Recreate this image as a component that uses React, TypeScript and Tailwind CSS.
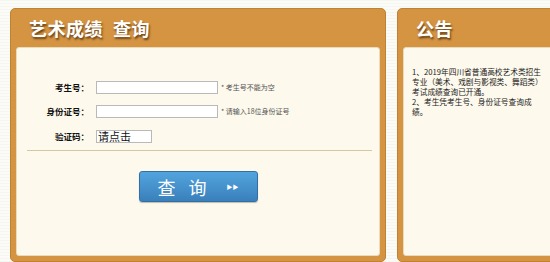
import React from 'react'

const cjk = { fontFamily: '"Noto Sans CJK SC", "Noto Sans", sans-serif' }

const Panel = ({ title, className, children }: { title: React.ReactNode; className: string; children: React.ReactNode }) => {
  return (
    <div
      className={`flex flex-col shrink-0 rounded-[5px] border border-[#bf8233] bg-[#d49442] px-[5px] pb-[5px] ${className}`}
    >
      <div className="h-[38px] flex items-center pl-[13px]">
        <h2
          className="flex gap-[10px] text-[18px] leading-none font-bold text-white tracking-[0.5px] [text-shadow:1px_2px_2px_rgba(70,40,10,0.75)]"
          style={cjk}
        >
          {title}
        </h2>
      </div>
      <div className="flex-1 rounded-[3px] border border-[#e9dcbd] bg-[#fdf9ec]">{children}</div>
    </div>
  )
}

const Row = ({ label, hint, children }: { label: string; hint?: string; children: React.ReactNode }) => {
  return (
    <div className="flex items-center h-[13px]">
      <label className="w-[73px] text-right text-[8.5px] font-bold text-[#111] pr-[1px]">{label}</label>
      <div className="ml-[6px] flex items-center">{children}</div>
      {hint && <span className="ml-[3px] text-[7px] text-[#555]">{hint}</span>}
    </div>
  )
}

export default function App() {
  return (
    <div
      className="w-[550px] h-[262px] overflow-hidden bg-[repeating-linear-gradient(0deg,#f6f6f1_0px,#f6f6f1_1px,#fbfbf8_1px,#fbfbf8_3px)]"
      style={cjk}
    >
      <div className="flex gap-[11px] pl-[10px] pt-[8px] h-[262px]">
        <Panel
          title={
            <>
              <span>艺术成绩</span>
              <span>查询</span>
            </>
          }
          className="w-[376px] h-[254px]"
        >
          <div className="flex flex-col pt-[33px]">
            <div className="flex flex-col gap-[11px]">
              <Row label="考生号：" hint="* 考生号不能为空">
                <input className="w-[122px] h-[13px] bg-white border border-[#b9b9b9] outline-none" />
              </Row>
              <Row label="身份证号：" hint="* 请输入18位身份证号">
                <input className="w-[122px] h-[13px] bg-white border border-[#b9b9b9] outline-none" />
              </Row>
              <div className="mt-[1px]">
                <Row label="验证码：">
                  <div className="w-[56px] h-[13px] bg-white border border-[#b9b9b9] flex items-center pl-[1px] text-[11px] leading-none text-[#111]">
                    请点击
                  </div>
                </Row>
              </div>
            </div>
            <div className="mt-[7px] ml-[10px] mr-[7px] h-[1px] bg-[#d2c8a4]" />
            <div className="flex justify-center mt-[20px]">
              <button className="w-[119px] h-[31px] rounded-[3px] border border-[#336fa6] bg-[linear-gradient(#52a4de,#3a80bb)] flex items-center justify-center text-white text-[18px] leading-none shadow-[0_1px_1px_rgba(0,0,0,0.25)]">
                <span>查</span>
                <span className="ml-[13px]">询</span>
                <span className="ml-[20px] text-[6px] tracking-[0px]">▶▶</span>
              </button>
            </div>
          </div>
        </Panel>
        <Panel title={<span>公告</span>} className="w-[200px] h-[254px]">
          <div className="pt-[19px] pl-[8px] w-[138px] text-[7.7px] leading-[10px] text-[#222]">
            <p>1、2019年四川省普通高校艺术类招生专业（美术、戏剧与影视类、舞蹈类）考试成绩查询已开通。</p>
            <p>2、考生凭考生号、身份证号查询成绩。</p>
          </div>
        </Panel>
      </div>
    </div>
  )
}
